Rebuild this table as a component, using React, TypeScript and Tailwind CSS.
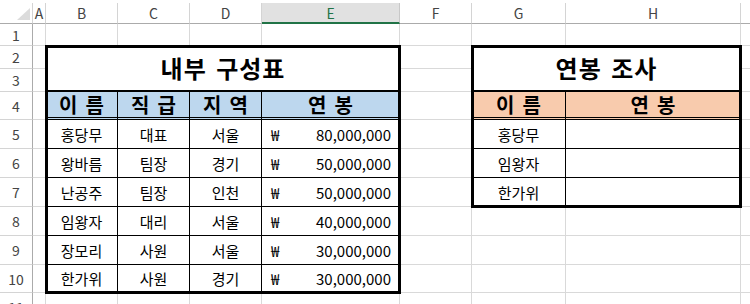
import React from "react";

// Excel-like sheet: two bordered tables over a gridline background
const LETTERS = ["A", "B", "C", "D", "E", "F", "G", "H", ""];

const staff = [
  ["홍당무", "대표", "서울", "80,000,000"],
  ["왕바름", "팀장", "경기", "50,000,000"],
  ["난공주", "팀장", "인천", "50,000,000"],
  ["임왕자", "대리", "서울", "40,000,000"],
  ["장모리", "사원", "서울", "30,000,000"],
  ["한가위", "사원", "경기", "30,000,000"],
];

const survey = ["홍당무", "임왕자", "한가위"];

const ROW_START = [
  "row-start-6",
  "row-start-7",
  "row-start-8",
  "row-start-9",
  "row-start-10",
  "row-start-11",
];

const gridTemplate =
  "grid grid-cols-[33px_13px_72px_72px_72px_138px_72px_94px_175px_40px] grid-rows-[21px_22px_23px_23px_28px_29px_29px_29px_29px_29px_28px_29px]";

const cell = "bg-white border-r border-b border-black flex items-center justify-center";

// header labels in the sheet are typed with a wide space between syllables
const Spaced = ({ text }: { text: string }) => (
  <span className="flex gap-[8px]">
    {text.split(" ").map((t) => (
      <span key={t}>{t}</span>
    ))}
  </span>
);

function SheetBackground() {
  return (
    <div className={`${gridTemplate} col-start-1 row-start-1`}>
      <div className="border-r border-b border-r-[#d4d4d4] border-b-[#ababab]">
        <svg width="33" height="21" className="block">
          <polygon points="30,5 30,17 17,17" fill="#dcdcdc" />
        </svg>
      </div>
      {LETTERS.map((l, i) =>
        l === "E" ? (
          <div
            key={i}
            className="flex items-center justify-center border-r border-b-2 border-r-[#c8c8c8] border-b-[#217346] bg-[#e1e1e1] text-[14px] text-[#217346]"
          >
            {l}
          </div>
        ) : (
          <div
            key={i}
            className="flex items-center justify-center border-r border-b border-r-[#d4d4d4] border-b-[#ababab] text-[14px] text-[#444]"
          >
            {l}
          </div>
        )
      )}
      {Array.from({ length: 11 }).map((_, r) => (
        <React.Fragment key={r}>
          <div className="flex items-center justify-center border-r border-b border-r-[#ababab] border-b-[#d4d4d4] text-[14px] text-[#444]">
            {r + 1}
          </div>
          {LETTERS.map((_, c) => (
            <div key={c} className="border-r border-b border-[#d9d9d9]" />
          ))}
        </React.Fragment>
      ))}
    </div>
  );
}

function Tables() {
  return (
    <div className={`${gridTemplate} col-start-1 row-start-1 text-black`}>
      {/* 내부 구성표 */}
      <div className="col-start-3 col-end-7 row-start-3 row-end-5 flex items-center justify-center border-b-2 border-black bg-white text-[24px] font-bold tracking-[1px] [word-spacing:3px]">
        내부 구성표
      </div>
      {["이 름", "직 급", "지 역", "연 봉"].map((h, i) => (
        <div
          key={h}
          className={`${["col-start-3", "col-start-4", "col-start-5", "col-start-6"][i]} row-start-5 flex items-center justify-center border-r border-b-[3px] border-double border-black bg-[#bdd7ee] text-[20px] font-bold`}
        >
          <Spaced text={h} />
        </div>
      ))}
      {staff.map((row, r) => (
        <React.Fragment key={r}>
          <div className={`${cell} col-start-3 ${ROW_START[r]} text-[15px]`}>{row[0]}</div>
          <div className={`${cell} col-start-4 ${ROW_START[r]} text-[15px]`}>{row[1]}</div>
          <div className={`${cell} col-start-5 ${ROW_START[r]} text-[15px]`}>{row[2]}</div>
          <div
            className={`col-start-6 ${ROW_START[r]} flex items-center justify-between border-r border-b border-black bg-white pl-[9px] pr-[8px] text-[15px]`}
          >
            <span>₩</span>
            <span>{row[3]}</span>
          </div>
        </React.Fragment>
      ))}
      <div className="col-start-3 col-end-7 row-start-3 row-end-12 -m-px border-[3px] border-black" />

      {/* 연봉 조사 */}
      <div className="col-start-8 col-end-10 row-start-3 row-end-5 flex items-center justify-center border-b-2 border-black bg-white text-[24px] font-bold tracking-[1px] [word-spacing:3px]">
        연봉 조사
      </div>
      <div className="col-start-8 row-start-5 flex items-center justify-center border-r border-b-[3px] border-double border-black bg-[#f8cbad] text-[20px] font-bold">
        <Spaced text="이 름" />
      </div>
      <div className="col-start-9 row-start-5 flex items-center justify-center border-r border-b-[3px] border-double border-black bg-[#f8cbad] text-[20px] font-bold">
        <Spaced text="연 봉" />
      </div>
      {survey.map((n, r) => (
        <React.Fragment key={n}>
          <div className={`${cell} col-start-8 ${ROW_START[r]} text-[15px]`}>{n}</div>
          <div className={`${cell} col-start-9 ${ROW_START[r]}`} />
        </React.Fragment>
      ))}
      <div className="col-start-8 col-end-10 row-start-3 row-end-9 -m-px border-[3px] border-black" />
    </div>
  );
}

export default function App() {
  return (
    <div className="grid h-[304px] w-[750px] overflow-hidden bg-white pt-[3px] font-['Noto_Sans_CJK_KR','Noto_Sans',sans-serif] leading-none">
      <SheetBackground />
      <Tables />
    </div>
  );
}
